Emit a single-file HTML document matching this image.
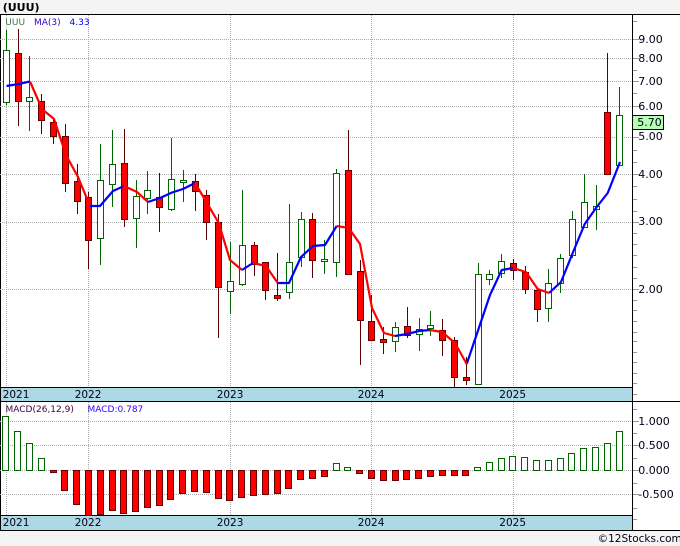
<!DOCTYPE html>
<html><head><meta charset="utf-8"><style>
html,body{margin:0;padding:0;background:#f4f4f4}
svg{display:block}
text{font-family:"DejaVu Sans","Liberation Sans",sans-serif}
</style></head><body>
<svg width="680" height="546" viewBox="0 0 680 546" xmlns="http://www.w3.org/2000/svg">
<rect width="680" height="546" fill="#f4f4f4"/>
<rect x="0" y="14" width="680" height="517" fill="#fff"/>
<rect x="0" y="387" width="632" height="14" fill="#add8e6"/>
<rect x="0" y="515" width="632" height="15" fill="#add8e6"/>
<g shape-rendering="crispEdges">
<path d="M0 14.5H680M0 387.5H632M0 401.5H680M0 515.5H632M0 530.5H680M632.5 14V531M.5 14V531" stroke="#000" fill="none"/>
<path d="M0 39.5H632M0 58.5H632M0 81.5H632M0 106.5H632M0 137.5H632M0 174.5H632M0 222.5H632M0 289.5H632M0 421.5H632M0 445.5H632M0 470.5H632M0 494.5H632" stroke="#aaa" stroke-dasharray="1 1" fill="none"/>
<path d="M6.5 15V387M88.5 15V387M230.5 15V387M371.5 15V387M513.5 15V387M6.5 402V515M88.5 402V515M230.5 402V515M371.5 402V515M513.5 402V515" stroke="#aaa" stroke-dasharray="1 1" fill="none"/>
<path d="M633 21.5h4M633 39.5h6M633 58.5h6M633 70.5h4M633 81.5h6M633 93.5h4M633 106.5h6M633 137.5h6M633 150.5h4M633 162.5h4M633 174.5h6M633 186.5h4M633 199.5h4M633 211.5h4M633 222.5h6M633 233.5h4M633 244.5h4M633 255.5h4M633 267.5h4M633 278.5h4M633 289.5h6M633 300.5h4M633 310.5h4M633 321.5h4M633 332.5h4M633 341.5h4M633 352.5h4M633 362.5h4M633 373.5h4M633 383.5h4M633 394.5h4M633 409.5h4M633 421.5h6M633 433.5h4M633 445.5h6M633 458.5h4M633 470.5h6M633 483.5h4M633 494.5h6M633 508.5h4M633 519.5h4" stroke="#999" fill="none"/>
<path d="M6.5 30V105M29.5 56V131M100.5 144V265M112.5 130V207M136.5 180V248M147.5 171V214M171.5 138V211M183.5 170V202M230.5 242V314M242.5 190V286M289.5 204V299M301.5 212V267M324.5 240V274M336.5 169V277M395.5 322V352M419.5 318V351M430.5 311V336M478.5 263V385M489.5 270V285M501.5 254V278M548.5 269V322M560.5 254V293M572.5 211V258M584.5 174V227M596.5 185V230M619.5 87V165" stroke="#006400" fill="none"/>
<path d="M18.5 29V126M41.5 94V134M53.5 118V144M65.5 124V192M77.5 164V214M88.5 192V269M124.5 129V227M159.5 173V232M195.5 174V211M206.5 190V240M218.5 214V338M254.5 242V276M265.5 262V300M277.5 253V301M312.5 213V278M348.5 130V275M360.5 260V365M371.5 295V340M383.5 327V354M407.5 307V338M442.5 319V356M454.5 337V387M466.5 357V385M513.5 259V280M525.5 266V294M537.5 289V322M607.5 53V174" stroke="#5a0000" fill="none"/>
<path d="M3.5 50.5h6V102.5h-6zM26.5 97.5h6V101.5h-6zM97.5 180.5h6V238.5h-6zM109.5 164.5h6V184.5h-6zM133.5 196.5h6V218.5h-6zM144.5 190.5h6V198.5h-6zM168.5 179.5h6V209.5h-6zM180.5 180.5h6V182.5h-6zM227.5 281.5h6V291.5h-6zM239.5 245.5h6V284.5h-6zM286.5 262.5h6V292.5h-6zM298.5 219.5h6V257.5h-6zM321.5 259.5h6V261.5h-6zM333.5 173.5h6V262.5h-6zM392.5 327.5h6V341.5h-6zM416.5 329.5h6V334.5h-6zM427.5 325.5h6V328.5h-6zM475.5 274.5h6V384.5h-6zM486.5 274.5h6V279.5h-6zM498.5 261.5h6V273.5h-6zM545.5 283.5h6V308.5h-6zM557.5 258.5h6V283.5h-6zM569.5 219.5h6V255.5h-6zM581.5 202.5h6V227.5h-6zM593.5 206.5h6V209.5h-6zM616.5 115.5h6V165.5h-6z" fill="#fff" stroke="#006400"/>
<path d="M15.5 53.5h6V101.5h-6zM38.5 101.5h6V120.5h-6zM50.5 122.5h6V136.5h-6zM62.5 136.5h6V183.5h-6zM74.5 181.5h6V201.5h-6zM85.5 197.5h6V240.5h-6zM121.5 163.5h6V219.5h-6zM156.5 197.5h6V207.5h-6zM192.5 181.5h6V191.5h-6zM203.5 195.5h6V222.5h-6zM215.5 222.5h6V287.5h-6zM251.5 245.5h6V264.5h-6zM262.5 262.5h6V290.5h-6zM274.5 295.5h6V298.5h-6zM309.5 219.5h6V260.5h-6zM345.5 170.5h6V274.5h-6zM357.5 271.5h6V320.5h-6zM368.5 321.5h6V340.5h-6zM380.5 339.5h6V342.5h-6zM404.5 326.5h6V335.5h-6zM439.5 330.5h6V340.5h-6zM451.5 340.5h6V377.5h-6zM463.5 377.5h6V380.5h-6zM510.5 263.5h6V270.5h-6zM522.5 272.5h6V289.5h-6zM534.5 290.5h6V309.5h-6zM604.5 112.5h6V174.5h-6z" fill="#f00" stroke="#660000"/>
<path d="M2.5 416.5h6V470.5h-6zM14.5 431.5h6V470.5h-6zM26.5 443.5h6V470.5h-6zM38.5 458.5h6V470.5h-6zM333.5 463.5h6V470.5h-6zM344.5 467.5h6V470.5h-6zM474.5 467.5h6V470.5h-6zM486.5 462.5h6V470.5h-6zM498.5 458.5h6V470.5h-6zM509.5 456.5h6V470.5h-6zM521.5 457.5h6V470.5h-6zM533.5 460.5h6V470.5h-6zM545.5 460.5h6V470.5h-6zM557.5 458.5h6V470.5h-6zM568.5 453.5h6V470.5h-6zM580.5 448.5h6V470.5h-6zM592.5 447.5h6V470.5h-6zM604.5 443.5h6V470.5h-6zM616.5 431.5h6V470.5h-6z" fill="#fff" stroke="#006400"/>
<path d="M50.5 470.5h6V472.5h-6zM61.5 470.5h6V490.5h-6zM73.5 470.5h6V504.5h-6zM85.5 470.5h6V515.5h-6zM97.5 470.5h6V514.5h-6zM109.5 470.5h6V510.5h-6zM120.5 470.5h6V513.5h-6zM132.5 470.5h6V511.5h-6zM144.5 470.5h6V507.5h-6zM156.5 470.5h6V505.5h-6zM167.5 470.5h6V499.5h-6zM179.5 470.5h6V493.5h-6zM191.5 470.5h6V491.5h-6zM203.5 470.5h6V492.5h-6zM215.5 470.5h6V498.5h-6zM226.5 470.5h6V500.5h-6zM238.5 470.5h6V497.5h-6zM250.5 470.5h6V495.5h-6zM262.5 470.5h6V494.5h-6zM274.5 470.5h6V493.5h-6zM285.5 470.5h6V488.5h-6zM297.5 470.5h6V479.5h-6zM309.5 470.5h6V478.5h-6zM321.5 470.5h6V476.5h-6zM356.5 470.5h6V473.5h-6zM368.5 470.5h6V478.5h-6zM380.5 470.5h6V480.5h-6zM392.5 470.5h6V480.5h-6zM403.5 470.5h6V479.5h-6zM415.5 470.5h6V478.5h-6zM427.5 470.5h6V476.5h-6zM439.5 470.5h6V475.5h-6zM451.5 470.5h6V475.5h-6zM462.5 470.5h6V475.5h-6z" fill="#f00" stroke="#660000"/>
<rect x="632.5" y="115.5" width="31" height="14" fill="#b4ffb4" stroke="#000"/>
</g>
<g fill="none" stroke-width="2.2" stroke-linejoin="round">
<path stroke="#00f" d="M6.5 86L18.5 84L30 81.5M90 206L100 206L113 191L124 186M148 202L160 198L172 192.500L183 189L195 183M242 270L253 263M277.700 283L289 283L301 257L313 246L325 245L336.700 226M395 336L407 334L419 331L430 330M466.700 364L490 295L501.700 270L513 268M549 293L561 282L572.700 253L584.700 224L596.700 207L607.700 193L620 162"/>
<path stroke="#f00" d="M30 81.500L42 109L54 119L66 155L78 177L90 206M124 186L137 192L148 202M195 183L207 203L218.700 223L230 260L242 270M253 263L266 266L277.700 283M336.700 226L348.700 228L360 244L372 308L384 333L395 336M430 330L442 332L455 343L466.700 364M513 268L526 272L537.700 289L549 293"/>
</g>
<text x="2.700" y="11" font-size="11" font-weight="bold" fill="#000">(UUU)</text>
<text x="5.300" y="25" font-size="9" fill="#3f6f3f">UUU</text>
<text x="34" y="25" font-size="9" fill="#3300cc">MA(3)</text>
<text x="69.500" y="25" font-size="9" fill="#0000ff">4.33</text>
<text x="5.500" y="412" font-size="9" fill="#400040">MACD(26,12,9)</text>
<text x="87.500" y="412" font-size="9" fill="#3300ff">MACD:0.787</text>
<g font-size="11" fill="#000018">
<text x="638.300" y="43">9.00</text>
<text x="638.300" y="62">8.00</text>
<text x="638.300" y="85">7.00</text>
<text x="638.300" y="110">6.00</text>
<text x="638.300" y="140">5.00</text>
<text x="638.300" y="178">4.00</text>
<text x="638.300" y="225">3.00</text>
<text x="638.300" y="293">2.00</text>
<text x="637.300" y="126">5.70</text>
<text x="638.300" y="425">1.000</text>
<text x="638.300" y="449">0.500</text>
<text x="638.300" y="474">0.000</text>
<text x="638.300" y="498">-0.500</text>
</g>
<g font-size="10.500" fill="#000018">
<text x="2.700" y="398">2021</text>
<text x="74.700" y="398">2022</text>
<text x="216.700" y="398">2023</text>
<text x="357.700" y="398">2024</text>
<text x="499.300" y="398">2025</text>
<text x="2.700" y="526">2021</text>
<text x="74.700" y="526">2022</text>
<text x="216.700" y="526">2023</text>
<text x="357.700" y="526">2024</text>
<text x="499.300" y="526">2025</text>
</g>
<text x="597.600" y="542" font-size="10.500" fill="#000018">©12Stocks.com</text>
</svg>
</body></html>
